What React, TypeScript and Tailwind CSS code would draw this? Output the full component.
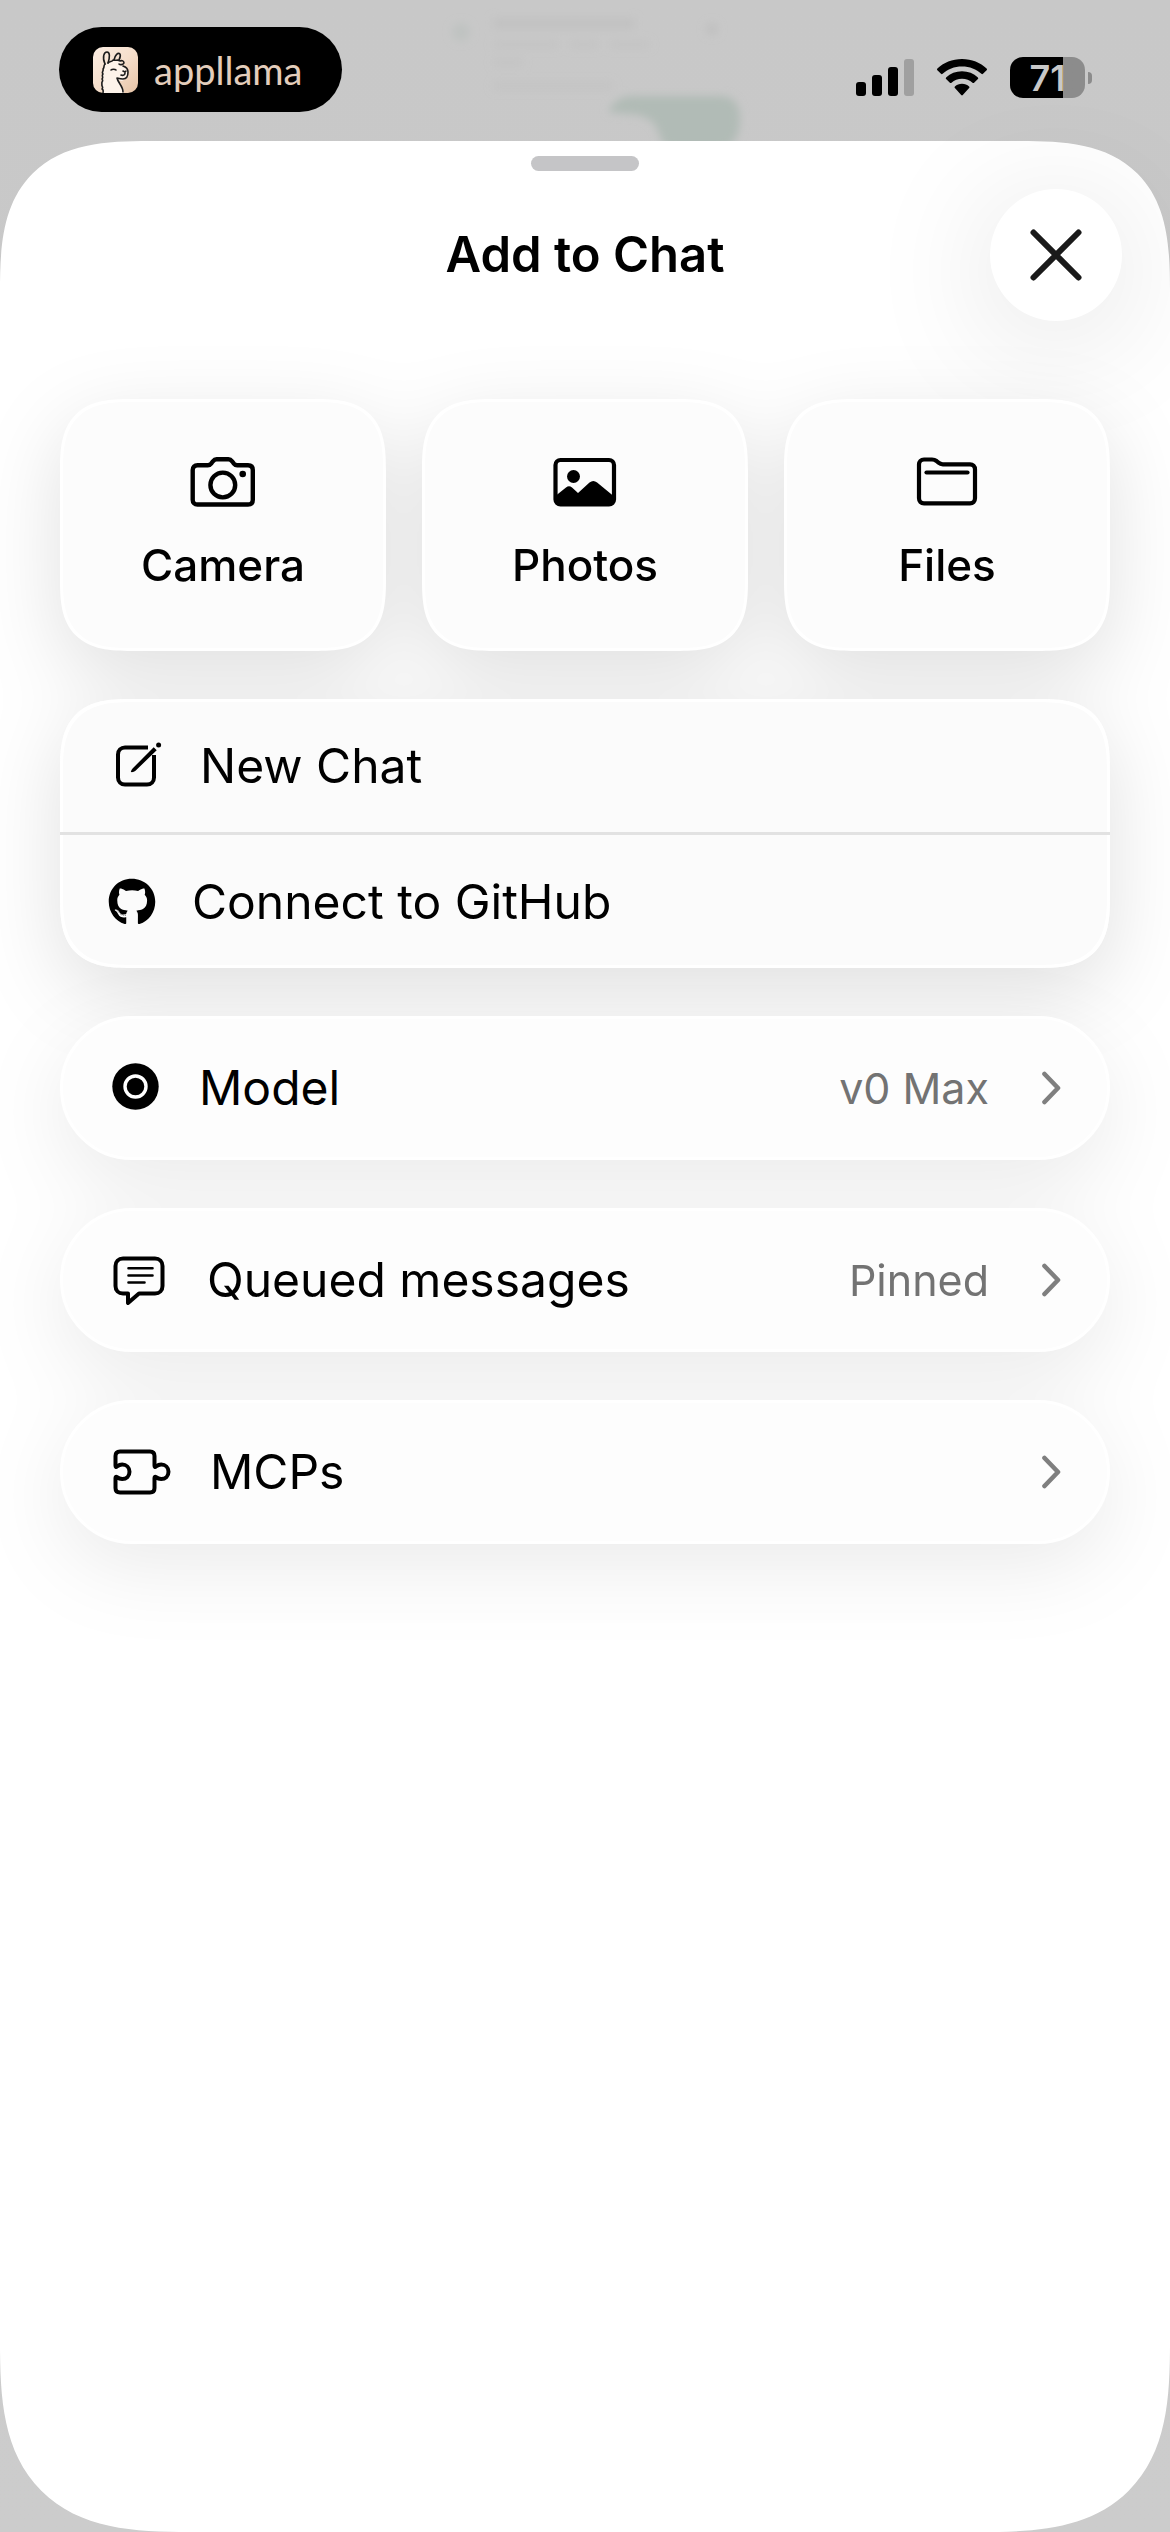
import type { ReactNode } from 'react';
import { FaGithub } from 'react-icons/fa';

interface TileProps {
  label: string;
  icon: ReactNode;
}

interface RowProps {
  label: string;
  icon: ReactNode;
}

interface PillProps extends RowProps {
  value?: string;
}

function LlamaIcon() {
  return (
    <svg width="45" height="46" viewBox="0 0 45 46" aria-hidden="true">
      <defs>
        <linearGradient id="llama-bg" x1="0" y1="0" x2="1" y2="1">
          <stop offset="0" stopColor="#fbeee3" />
          <stop offset="0.5" stopColor="#f6dfcc" />
          <stop offset="1" stopColor="#e6c3a6" />
        </linearGradient>
      </defs>
      <rect width="45" height="46" rx="10" fill="url(#llama-bg)" />
      <path
        d="M9 46c2-3 0-5 1-8-2-2 0-4-1-6 2-2-1-4 1-6-1-3 2-4 2-7 2-1 1-3 3-4l6-1 6-1 2 5 4 3 2 6-1 4-5 3-4-1c1 5 6 7 6 13Z"
        fill="#fdf3ea"
      />
      <g fill="none" stroke="#1c1c1c" strokeWidth="1.6" strokeLinecap="round" strokeLinejoin="round">
        <path d="M12 17C9 10 11 5 14 5s3 5 1 11" />
        <path d="M21 13c1-5 4-8 6-6 1 2 0 4-1 6" />
        <path d="M15 16c2-2 4-1 5-3 3 1 5-1 7 1 2-1 4 0 4 2-1 2-4 2-5 1" />
        <path d="M12 17c-2 2 0 3-2 5 1 2-2 3 0 5-2 2 1 3-1 5 2 2-1 3 0 5-1 2 2 3 0 5 2 1 1 2 1 4" />
        <path d="M30 19c3 1 5 3 5 6s-1 7-5 7-5-1-6-1c1 5 6 8 6 14" />
        <path d="M18 23c1-1 4-1 5 0M30 24l2 1 1-1M32 26c0 2-2 3-4 2" />
      </g>
    </svg>
  );
}

function SignalIcon() {
  return (
    <svg width="58" height="37" viewBox="0 0 58 37" aria-hidden="true">
      <rect x="0" y="23" width="10" height="14" rx="3" />
      <rect x="16" y="16" width="10" height="21" rx="3" />
      <rect x="32" y="8" width="10" height="29" rx="3" />
      <rect x="48" y="0" width="10" height="37" rx="3" fill="#a0a0a0" />
    </svg>
  );
}

function WifiIcon() {
  return (
    <svg width="50" height="37" viewBox="0 0 50 37" aria-hidden="true">
      <path d="M25 0c9.700 0 18.500 3.500 24.600 9.600q.800.800 0 1.600l-3.600 3.600q-.800.800-1.600 0C39.500 10 32.700 7.400 25 7.400S10.500 10 5.600 14.800q-.800.800-1.600 0L.4 11.200q-.800-.800 0-1.600C6.500 3.500 15.300 0 25 0Z" />
      <path d="M25 12.300c6.200 0 11.600 2.200 15.900 6.100q.800.800 0 1.600l-3.800 3.700q-.800.700-1.600 0c-2.800-2.500-6.400-3.900-10.500-3.900s-7.700 1.400-10.500 3.900q-.800.700-1.600 0L9.100 20q-.800-.800 0-1.600c4.300-3.900 9.700-6.100 15.900-6.100Z" />
      <path d="M25 24.800c2.800 0 5.200 1 7.100 2.700q.900.800 0 1.600l-6.300 6.900q-.800.800-1.600 0l-6.300-6.900q-.900-.8 0-1.600c1.900-1.700 4.300-2.700 7.100-2.700Z" />
    </svg>
  );
}

function Battery() {
  return (
    <div className="flex items-center gap-[3px]" role="img" aria-label="Battery 71%">
      <div className="flex h-[41px] w-[75px] items-center justify-center rounded-[13px] bg-linear-to-r from-black from-[71%] to-[#8c8c8c] to-[71%] text-[36px] leading-none font-semibold text-[#c8c8c8]">
        71
      </div>
      <div className="h-3 w-1 rounded-r-full bg-[#8c8c8c]" />
    </div>
  );
}

function CameraIcon() {
  return (
    <svg width="66" height="52" viewBox="0 0 66 52" fill="none" stroke="currentColor" strokeWidth="4.400" strokeLinejoin="round" aria-hidden="true">
      <path d="M7.500 9.300h10.300c1.800 0 2.500-.600 3.600-2l1.500-2c1.100-1.400 1.900-2 3.700-2h11.800c1.800 0 2.600.600 3.700 2l1.500 2c1.100 1.400 1.800 2 3.600 2h10.800c3 0 4.800 1.800 4.800 4.800v29.600c0 3-1.800 4.800-4.800 4.800H7.500c-3 0-4.800-1.800-4.800-4.800V14.100c0-3 1.800-4.800 4.800-4.800Z" />
      <circle cx="32.800" cy="29" r="12.400" />
      <circle cx="52.700" cy="18" r="3.300" fill="currentColor" stroke="none" />
    </svg>
  );
}

function PhotosIcon() {
  return (
    <svg width="64" height="52" viewBox="0 0 64 52" aria-hidden="true">
      <rect x="2.500" y="4" width="58.500" height="44.500" rx="5" fill="none" stroke="currentColor" strokeWidth="4.200" />
      <circle cx="20.500" cy="20.500" r="6.500" />
      <path d="M3 39.500 13 31.500q3-2.300 6 0l6 5.400 11.500-10.500q3.800-3 7.600 0L60.500 40v4q0 5-5 5H8q-5 0-5-5Z" />
    </svg>
  );
}

function FilesIcon() {
  return (
    <svg width="62" height="52" viewBox="0 0 62 52" fill="none" stroke="currentColor" strokeWidth="4.200" strokeLinecap="round" strokeLinejoin="round" aria-hidden="true">
      <path d="M8 3.500h8c2 0 3 .3 4.500 1.500l2 1.700c1.300 1.100 2.500 1.600 4.300 1.600H54c3 0 5 2 5 5v29c0 3-2 5-5 5H8c-3 0-5-2-5-5V8.500c0-3 2-5 5-5Z" />
      <path d="M10.500 16.500h41" />
    </svg>
  );
}

function ComposeIcon() {
  return (
    <svg className="h-[50px] w-14" viewBox="0 0 56 50" fill="none" stroke="currentColor" strokeWidth="4" aria-hidden="true">
      <path d="M40 6.500H17c-4 0-7 3-7 7v23c0 4 3 7 7 7h22c4 0 7-3 7-7V14" />
      <path d="M22.800 31c.3-1.300.9-2.600 2-3.700L45.700 6.200l3 3L27.500 29.800c-1.200 1-3.200 1.600-4.700 1.200Z" fill="currentColor" stroke="none" />
      <circle cx="50.600" cy="4" r="2.500" fill="currentColor" stroke="none" />
    </svg>
  );
}

function ModelIcon() {
  return (
    <svg className="h-[50px] w-[55px]" viewBox="0 0 55 50" fill="none" aria-hidden="true">
      <circle cx="27.500" cy="23.500" r="23.200" fill="currentColor" />
      <circle cx="27.500" cy="23.500" r="10.500" stroke="#fff" strokeWidth="3.400" />
    </svg>
  );
}

function QueueIcon() {
  return (
    <svg className="h-[50px] w-[63px]" viewBox="0 0 63 50" fill="none" stroke="currentColor" strokeWidth="4" strokeLinecap="round" strokeLinejoin="round" aria-hidden="true">
      <path d="M15 3.500h32c4.500 0 7.500 3 7.500 7.500v20c0 4.500-3 7.500-7.500 7.500H31L20 48V38.500h-5c-4.500 0-7.500-3-7.500-7.500V11c0-4.500 3-7.500 7.500-7.500Z" />
      <path strokeWidth="2.600" d="M20.500 13.200h24M20.500 20.500h24M20.500 27.500h16" />
    </svg>
  );
}

function PuzzleIcon() {
  return (
    <svg className="h-[50px] w-[66px]" viewBox="0 0 66 50" fill="none" stroke="currentColor" strokeWidth="4" strokeLinejoin="round" aria-hidden="true">
      <path d="M12 4.500h30c3 0 4.500 1.500 4.500 4.500v9.500c0 1.300.5 1.800 1.500 1 1.600-1.200 3.300-1.900 5.200-1.900 4.200 0 7.300 3 7.300 7.200s-3.100 7.200-7.300 7.200c-1.900 0-3.600-.6-5.200-1.900-1-.8-1.500-.3-1.500 1V41c0 3-1.500 4.500-4.500 4.500H12c-3 0-4.500-1.500-4.500-4.500v-9.900c0-1.300.5-1.800 1.500-1 1.600 1.300 3.300 1.900 5.200 1.900 4.200 0 7.300-3 7.300-7.200s-3.100-7.200-7.300-7.200c-1.900 0-3.600.7-5.200 1.900-1 .8-1.500.3-1.500-1V9c0-3 1.500-4.500 4.500-4.500Z" />
    </svg>
  );
}

function Chevron() {
  return (
    <svg width="20" height="34" viewBox="0 0 20 34" fill="none" stroke="#7f7f7f" strokeWidth="4.600" strokeLinecap="round" strokeLinejoin="round" aria-hidden="true">
      <path d="m3.500 3 13.500 14L3.500 31" />
    </svg>
  );
}

// whatever chat was open, showing through the dimmed backdrop
function Backdrop() {
  return (
    <svg className="absolute inset-x-0 top-0 mx-auto" width="400" height="142" viewBox="385 0 400 142" aria-hidden="true">
      <filter id="soft" x="-20%" y="-20%" width="140%" height="140%">
        <feGaussianBlur stdDeviation="4" />
      </filter>
      <g filter="url(#soft)">
        <g fill="#bfbfbf">
          <rect x="493" y="18" width="142" height="11" opacity="0.700" />
          <rect x="493" y="41" width="65" height="7" opacity="0.500" />
          <rect x="570" y="41" width="28" height="7" opacity="0.500" />
          <rect x="610" y="41" width="40" height="7" opacity="0.500" />
          <rect x="493" y="59" width="30" height="7" opacity="0.500" />
          <rect x="493" y="82" width="120" height="8" opacity="0.500" />
          <circle cx="712" cy="29" r="6" />
        </g>
        <circle cx="461" cy="32" r="9" fill="#bfc3c1" />
        <path d="M608 112q8-16 24-16h88q20 0 20 23t-16 30h-54q-6 0-12-18-6-17-32-17Z" fill="#b1bbb6" />
      </g>
    </svg>
  );
}

function Tile({ label, icon }: TileProps) {
  return (
    <button
      type="button"
      className="flex h-[252px] flex-1 flex-col items-center gap-[30px] rounded-[60px] border-3 border-white bg-[#fcfcfc] pt-[54px] text-[44px] leading-[54px] font-medium supports-[corner-shape:squircle]:rounded-[72px] supports-[corner-shape:squircle]:[corner-shape:superellipse(1.5)]"
    >
      {icon}
      {label}
    </button>
  );
}

function Row({ label, icon }: RowProps) {
  return (
    <button type="button" className="flex h-[133px] w-full items-center gap-9 pl-12 text-left text-[48px] leading-[60px]">
      {icon}
      {label}
    </button>
  );
}

function Pill({ label, icon, value }: PillProps) {
  return (
    <button
      type="button"
      className="flex h-36 w-full items-center gap-9 rounded-full border-3 border-white bg-[#fdfdfd] pr-[46px] pl-[45px] text-left text-[48px] leading-[60px]"
    >
      {icon}
      <span className="flex-1">{label}</span>
      {value && <span className="mr-4 text-[43px] text-[#737373]">{value}</span>}
      <Chevron />
    </button>
  );
}

export default function App() {
  return (
    <div className="relative flex min-h-screen flex-col bg-linear-to-b from-[#c8c8c8] to-[#cccccc] font-['Inter','Liberation_Sans',sans-serif] text-black">
      <Backdrop />
      <header className="relative flex h-[141px] shrink-0 items-start justify-between pt-[27px] pr-[78px] pl-[59px]">
        <div className="flex h-[85px] w-[283px] items-center gap-4 rounded-full bg-black pl-[34px]">
          <LlamaIcon />
          <span className="font-['Lato',sans-serif] text-[38px] leading-none text-[#e3cdbb]">appllama</span>
        </div>
        <div className="flex items-center gap-[23px] pt-[30px]">
          <SignalIcon />
          <WifiIcon />
          <Battery />
        </div>
      </header>

      <main className="relative flex-1 rounded-t-[115px] rounded-b-[141px] bg-white supports-[corner-shape:squircle]:rounded-t-[150px] supports-[corner-shape:squircle]:rounded-b-[190px] supports-[corner-shape:squircle]:[corner-shape:superellipse(1.5)]">
        <div className="flex justify-center pt-[15px]">
          <div className="h-[15px] w-[108px] rounded-full bg-[#c5c5c7]" />
        </div>
        <div className="mt-[18px] grid grid-cols-[132px_1fr_132px] items-center px-12">
          <h1 className="col-start-2 text-center text-[49px] leading-[60px] font-semibold">Add to Chat</h1>
          <button
            type="button"
            aria-label="Close"
            className="flex size-[132px] items-center justify-center rounded-full bg-white shadow-[0_16px_130px_rgba(0,0,0,0.13)]"
          >
            <svg width="52" height="52" viewBox="0 0 52 52" stroke="#1a1a1a" strokeWidth="6" strokeLinecap="round" aria-hidden="true">
              <path d="m3.500 3.500 45 45M48.500 3.500l-45 45" />
            </svg>
          </button>
        </div>

        <div className="mt-[78px] flex flex-col gap-12 px-[60px] drop-shadow-[0_24px_40px_rgba(0,0,0,0.12)]">
          <div className="flex gap-9">
            <Tile label="Camera" icon={<CameraIcon />} />
            <Tile label="Photos" icon={<PhotosIcon />} />
            <Tile label="Files" icon={<FilesIcon />} />
          </div>
          <div className="rounded-[60px] bg-[#fbfbfb] shadow-[inset_0_0_0_3px_#fff] supports-[corner-shape:squircle]:rounded-[72px] supports-[corner-shape:squircle]:[corner-shape:superellipse(1.5)]">
            <Row label="New Chat" icon={<ComposeIcon />} />
            <hr className="border-t-3 border-[#e2e2e2]" />
            <Row label="Connect to GitHub" icon={<FaGithub className="size-12" />} />
          </div>
        </div>

        <div className="mt-12 flex flex-col gap-12 px-[60px] drop-shadow-[0_24px_40px_rgba(0,0,0,0.08)]">
          <Pill label="Model" icon={<ModelIcon />} value="v0 Max" />
          <Pill label="Queued messages" icon={<QueueIcon />} value="Pinned" />
          <Pill label="MCPs" icon={<PuzzleIcon />} />
        </div>
      </main>
    </div>
  );
}
